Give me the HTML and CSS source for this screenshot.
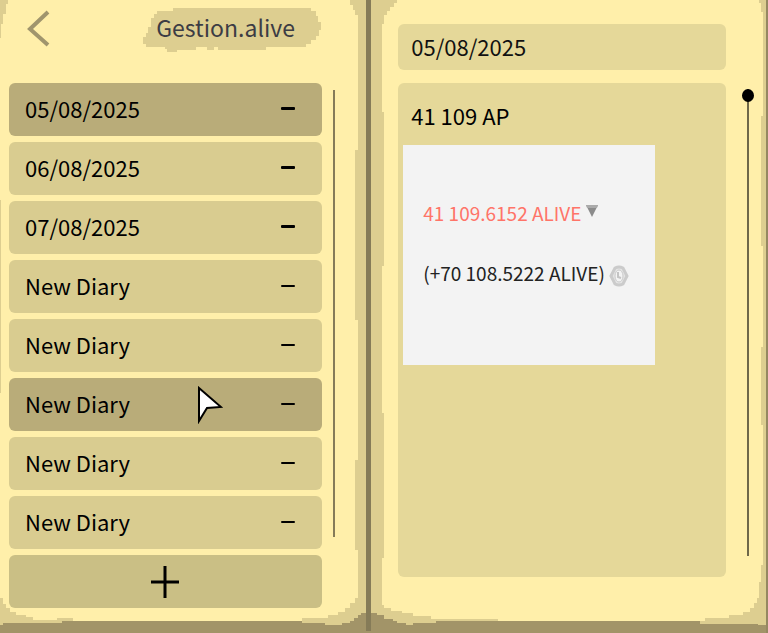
FILE: index.html
```html
<!DOCTYPE html>
<html lang="en">
<head>
  <meta charset="UTF-8">
  <title>Gestion.alive</title>
  <link rel="stylesheet" href="styles.css">
</head>
<body>
<main class="book">
  <!-- Paper edges and spine -->
  <svg class="paper" viewBox="0 0 768 633" preserveAspectRatio="none" aria-hidden="true">
    <rect width="768" height="633" fill="#ddce90"/>
    <path fill="#a29468" d="M0 625H3V623H62V621H302V623H325V625H342V623H350V621H354V618H358V615H361V613H377V615H384V619H393V621H397V623H406V625H413V623H436V621H700V624H758V625H766V633H0Z"/>
    <path fill="#ffefaa" d="M8 0H350V5H353V10H355V15H358V150H355V320H358V460H355V550H358V598H355V603H350V608H345V612H338V615H328V618H302V621H73V618H57V620H33V617H26V615H16V612H10V608H6V604H3V598H0V393H1V200H0V38H1V24H3V14H6V4H8Z"/>
    <path fill="#ffefaa" d="M397 0H759V3H761V12H763V116H761V246H763V347H761V425H763V565H761V582H759V598H757V603H754V608H750V612H743V615H729V618H705V621H498V619H431V616H413V613H402V611H391V608H384V605H382V558H384V413H382V266H384V112H382V24H384V15H387V11H390V7H394V3H397Z"/>
    <rect x="366" width="5" height="631" fill="#857b58"/>
    <rect x="766" width="2" height="633" fill="#958861"/>
  </svg>

  <section class="page page-left">
    <header class="top">
      <button class="back" aria-label="Back">
        <svg width="24" height="40" viewBox="0 0 24 40"><path d="M21 4L3 21L21 37" fill="none" stroke="#a0956d" stroke-width="4"/></svg>
      </button>
      <h1 class="title">
        <svg class="stain" viewBox="0 0 178 43" preserveAspectRatio="none" aria-hidden="true"><path fill="#ddce90" d="M14 3H30V0H168V3H173V8H175V14H178V22H176V28H173V32H168V36H163V39H123V42H75V39H71V42H64V39H53V42H34V44H24V41H22V39H3V36H0V29H3V25H5V19H8V10H11V6H14Z"/></svg>
        <span>Gestion.alive</span>
      </h1>
    </header>

    <div class="list-area">
      <ul class="diaries">
        <li class="diary active"><button class="name">05/08/2025</button><button class="remove thick" aria-label="Remove"></button></li>
        <li class="diary"><button class="name">06/08/2025</button><button class="remove thick" aria-label="Remove"></button></li>
        <li class="diary"><button class="name">07/08/2025</button><button class="remove thick" aria-label="Remove"></button></li>
        <li class="diary"><button class="name">New Diary</button><button class="remove" aria-label="Remove"></button></li>
        <li class="diary"><button class="name">New Diary</button><button class="remove" aria-label="Remove"></button></li>
        <li class="diary active">
          <button class="name">New Diary</button><button class="remove" aria-label="Remove"></button>
          <svg class="pointer" width="26" height="38" viewBox="0 0 26 38" aria-hidden="true"><path d="M2 2L24 21L10 22L2 35Z" fill="#fff" stroke="#000" stroke-width="2"/></svg>
        </li>
        <li class="diary"><button class="name">New Diary</button><button class="remove" aria-label="Remove"></button></li>
        <li class="diary"><button class="name">New Diary</button><button class="remove" aria-label="Remove"></button></li>
        <li><button class="add" aria-label="Add diary">
          <svg width="28" height="32" viewBox="0 0 28 32"><path d="M0 16H28M14 0V32" stroke="#000" stroke-width="3"/></svg>
        </button></li>
      </ul>
      <div class="scroll-line"></div>
    </div>
  </section>

  <section class="page page-right">
    <input class="date" type="text" value="05/08/2025" aria-label="Diary title">
    <div class="entry-area">
      <article class="entry">
        <p class="text">41 109 AP</p>
        <div class="card">
          <p class="balance down">41 109.6152 ALIVE
            <svg width="12" height="12" viewBox="0 0 12 12"><path d="M0 0H12L6 12Z" fill="#8b8b8b"/><path d="M0 0H12L11 3H1Z" fill="#aaa"/></svg>
          </p>
          <p class="balance">(+70 108.5222 ALIVE)
            <svg class="eye" width="20" height="22" viewBox="0 0 20 22"><path d="M2 11L6 3Q10 1 14 3L18 11L14 19Q10 21 6 19Z" fill="#e4e4e4" stroke="#cbcbcb" stroke-width="3"/><ellipse cx="10" cy="11" rx="4" ry="6" fill="#f3f3f3" stroke="#cbcbcb" stroke-width="1"/><path d="M9 7V12L12 13" fill="none" stroke="#c4c4c4" stroke-width="2"/></svg>
          </p>
        </div>
      </article>
      <input class="scroll" type="range" min="0" max="100" value="0" aria-label="Scroll entry">
    </div>
  </section>
</main>
</body>
</html>
```
FILE: styles.css
```css
* {
  box-sizing: border-box;
}
body {
  margin: 0;
  background: #ffefaa;
  font-family: "Noto Sans CJK SC", "Noto Sans", sans-serif;
  font-size: 22px;
  line-height: 32px;
  color: #000;
}
h1, p, ul {
  margin: 0;
  padding: 0;
}
ul {
  list-style: none;
}
button {
  padding: 0;
  border: none;
  background: none;
  font: inherit;
  color: inherit;
  cursor: pointer;
}
.book {
  position: relative;
  display: grid;
  grid-template-columns: 48fr 52fr;
  column-gap: 5px;
  min-height: 100vh;
}
.paper {
  position: absolute;
  inset: 0;
  width: 100%;
  height: 100%;
  shape-rendering: crispEdges;
}
.page {
  position: relative;
  display: flex;
  flex-direction: column;
}

/* Left page */
.page-left {
  padding: 0 31px 24px 9px;
}
.top {
  display: flex;
  justify-content: space-between;
  align-items: flex-start;
  height: 83px;
  padding: 8px 14px 0 18px;
}
.back {
  height: 40px;
}
.back svg, .add svg {
  display: block;
}
.title {
  position: relative;
  width: 178px;
  height: 43px;
  padding: 3px 13px;
  font-size: 23px;
  font-weight: 400;
  color: #3c3c44;
}
.title span {
  position: relative;
}
.stain {
  position: absolute;
  inset: 0;
  width: 100%;
  height: 100%;
  overflow: visible;
  shape-rendering: crispEdges;
}
.list-area {
  display: flex;
  gap: 11px;
}
.diaries {
  flex: 1;
  display: grid;
  gap: 6px;
}
.diary {
  position: relative;
  display: flex;
  height: 53px;
  border-radius: 6px;
  background: #d9cc90;
}
.diary.active {
  background: #b9ac79;
}
.name {
  flex: 1;
  padding: 0 0 4px 16px;
  text-align: left;
}
.remove {
  width: 68px;
  padding-bottom: 2px;
}
.remove::before {
  content: "";
  display: block;
  width: 14px;
  height: 2px;
  margin: 0 auto;
  border-radius: 1px;
  background: #000;
}
.remove.thick::before {
  height: 3px;
}
.pointer {
  position: absolute;
  left: 60%;
  top: 8px;
}
.add {
  display: flex;
  align-items: center;
  justify-content: center;
  width: 100%;
  height: 53px;
  padding-right: 2px;
  border-radius: 6px;
  background: #cabf85;
}
.scroll-line {
  width: 2px;
  margin: 7px 0 71px;
  background: #857b58;
}

/* Right page */
.page-right {
  padding: 24px 14px 56px 27px;
}
.date {
  height: 46px;
  margin: 0 28px 13px 0;
  padding: 0 13px 2px;
  border: none;
  border-radius: 6px;
  background: #e5d899;
  font: inherit;
  color: #111;
}
.entry-area {
  flex: 1;
  display: flex;
  gap: 16px;
}
.entry {
  flex: 1;
  padding: 16px 5px;
  border-radius: 6px;
  background: #e5d899;
}
.text {
  padding: 0 8px;
  margin-bottom: 14px;
}
.card {
  width: 252px;
  max-width: 100%;
  height: 220px;
  padding: 38px 20px;
  background: #f3f3f3;
}
.balance {
  font-size: 19px;
  line-height: 60px;
  white-space: nowrap;
  color: #222;
}
.balance.down {
  color: #ff7468;
}
.balance svg {
  vertical-align: 4px;
}
.balance .eye {
  vertical-align: -6px;
}
.scroll {
  appearance: none;
  writing-mode: vertical-lr;
  width: 12px;
  margin: 6px 0 21px;
  background: linear-gradient(#6f6849, #6f6849) center / 2px 100% no-repeat;
}
.scroll::-webkit-slider-thumb {
  appearance: none;
  width: 12px;
  height: 13px;
  border-radius: 50%;
  background: #000;
}
```
